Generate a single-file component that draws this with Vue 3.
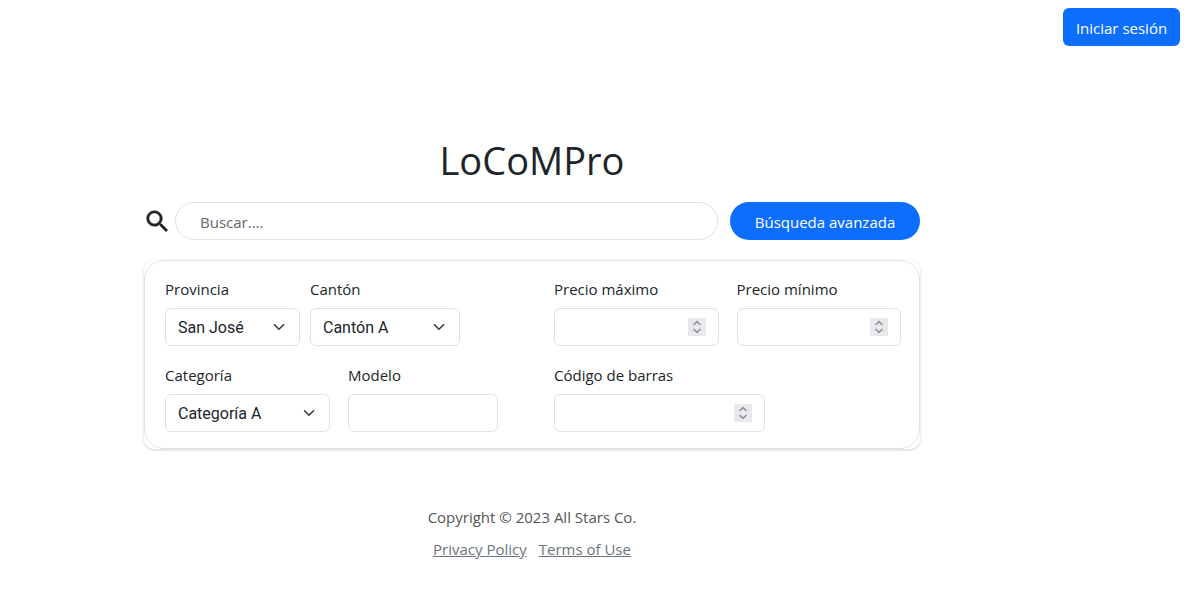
<script setup>
import { ref } from 'vue'

const provincia = ref('San José')
const canton = ref('Cantón A')
const categoria = ref('Categoría A')

const rows = [
  [
    { id: 'provincia', label: 'Provincia', kind: 'select', size: 'w-135', model: provincia, options: ['San José', 'Alajuela', 'Cartago'] },
    { id: 'canton', label: 'Cantón', kind: 'select', size: 'w-150', model: canton, options: ['Cantón A', 'Cantón B'] },
  ],
  [
    { id: 'precio-maximo', label: 'Precio máximo', kind: 'number', size: 'w-165' },
    { id: 'precio-minimo', label: 'Precio mínimo', kind: 'number', size: 'w-165' },
  ],
  [
    { id: 'categoria', label: 'Categoría', kind: 'select', size: 'w-165', model: categoria, options: ['Categoría A', 'Categoría B'] },
    { id: 'modelo', label: 'Modelo', kind: 'text', size: 'w-150' },
  ],
  [
    { id: 'codigo', label: 'Código de barras', kind: 'number', size: 'w-211' },
  ],
]
</script>

<template>
  <div class="page">
    <header class="topbar">
      <button type="button" class="btn">Iniciar sesión</button>
    </header>

    <main class="content">
      <h1>LoCoMPro</h1>

      <form class="search" role="search" @submit.prevent>
        <svg class="search-icon" viewBox="0 0 24 24" aria-hidden="true">
          <path d="M15.5 14h-.79l-.28-.27A6.471 6.471 0 0 0 16 9.5 6.5 6.5 0 1 0 9.5 16c1.61 0 3.09-.59 4.23-1.57l.27.28v.79l5 4.99L20.49 19l-4.99-5zm-6 0C7.01 14 5 11.99 5 9.5S7.01 5 9.5 5 14 7.01 14 9.5 11.99 14 9.5 14z" />
        </svg>
        <input type="search" class="search-input" placeholder="Buscar...." aria-label="Buscar" />
        <button type="button" class="btn pill">Búsqueda avanzada</button>
      </form>

      <section class="card">
        <div class="filters">
          <div v-for="(row, i) in rows" :key="i" class="group" :class="{ tight: i === 0 }">
            <div v-for="field in row" :key="field.id" :class="field.size">
              <label :for="field.id">{{ field.label }}</label>
              <div class="control">
                <template v-if="field.kind === 'select'">
                  <select :id="field.id" v-model="field.model.value">
                    <option v-for="o in field.options" :key="o">{{ o }}</option>
                  </select>
                  <svg class="chevron" viewBox="0 0 16 16" aria-hidden="true"><path d="m2 5 6 6 6-6" /></svg>
                </template>
                <template v-else>
                  <input :id="field.id" :type="field.kind" />
                  <svg v-if="field.kind === 'number'" class="spinner" viewBox="0 0 18 18" aria-hidden="true">
                    <path d="M5.5 7 9 3.7 12.5 7M5.5 11 9 14.3 12.5 11" />
                  </svg>
                </template>
              </div>
            </div>
          </div>
        </div>
      </section>

      <footer>
        <p>Copyright © 2023 All Stars Co.</p>
        <nav>
          <a href="#privacy">Privacy Policy</a>
          <a href="#terms">Terms of Use</a>
        </nav>
      </footer>
    </main>
  </div>
</template>

<style>
body {
  margin: 0;
  background: #fff;
}
</style>

<style scoped>
.page {
  font-family: "Segoe UI", "Open Sans", "Noto Sans", sans-serif;
  font-size: 15px;
  line-height: 24px;
  color: #212529;
}
.page *,
.page {
  box-sizing: border-box;
}
.topbar {
  display: flex;
  justify-content: flex-end;
  padding: 8px 7px;
}
.btn {
  height: 38px;
  min-width: 117px;
  padding: 2px 12px 0;
  border: 0;
  border-radius: 6px;
  background: #0d6efd;
  color: #fff;
  font: inherit;
  white-space: nowrap;
  cursor: pointer;
}
.content {
  margin: 82px 267px 0 144px;
}
h1 {
  margin: 0;
  font-size: 38px;
  font-weight: 400;
  line-height: 48px;
  text-align: center;
}
.search {
  display: flex;
  align-items: center;
  margin-top: 18px;
}
.search-icon {
  flex: none;
  width: 29px;
  height: 29px;
  margin-left: -1px;
  margin-right: 3px;
  fill: #212529;
  stroke: #212529;
  stroke-width: 0.4;
}
input,
select {
  display: block;
  width: 100%;
  height: 38px;
  margin: 0;
  padding: 0 12px;
  border: 1px solid #dee2e6;
  border-radius: 6px;
  background: #fff;
  color: #212529;
  font: inherit;
  appearance: none;
}
.search-input {
  flex: 1;
  min-width: 0;
  margin-right: 12px;
  padding: 2px 24px 0;
  border-radius: 19px;
}
.search-input::placeholder {
  color: #5f666d;
  opacity: 1;
}
.pill {
  width: 190px;
  border-radius: 19px;
}
.card {
  margin-top: 20px;
  border-radius: 10px;
  box-shadow: 0 1px 3px rgba(0, 0, 0, 0.18);
}
.filters {
  display: grid;
  grid-template-columns: 389fr 347fr;
  row-gap: 17px;
  padding: 16px 18px 16px 20px;
  border: 1px solid #dee2e6;
  border-radius: 20px;
}
.group {
  display: flex;
  gap: 18px;
  min-width: 0;
}
.group.tight {
  gap: 10px;
}
.w-135 {
  width: 135px;
}
.w-150 {
  width: 150px;
}
.w-165 {
  width: 165px;
}
.w-211 {
  width: 211px;
}
label {
  display: block;
  margin-bottom: 7px;
  white-space: nowrap;
}
.control {
  position: relative;
}
select {
  padding: 2px 36px 0 12px;
  font-family: Roboto, sans-serif;
  font-size: 16px;
}
input[type="number"] {
  padding-right: 36px;
  appearance: textfield;
}
.chevron,
.spinner {
  position: absolute;
  top: 0;
  bottom: 0;
  right: 13px;
  margin: auto 0;
  fill: none;
  pointer-events: none;
}
.chevron {
  width: 16px;
  height: 12px;
  stroke: #343a40;
  stroke-width: 2;
  stroke-linecap: round;
  stroke-linejoin: round;
}
.spinner {
  width: 18px;
  height: 18px;
  background: #e9e9ed;
  stroke: #8f8f9d;
  stroke-width: 1.6;
}
footer {
  margin-top: 56px;
  color: #555;
  text-align: center;
}
footer p {
  margin: 0 0 8px;
}
nav {
  display: flex;
  justify-content: center;
  gap: 12px;
}
a {
  color: #6c757d;
}
</style>
